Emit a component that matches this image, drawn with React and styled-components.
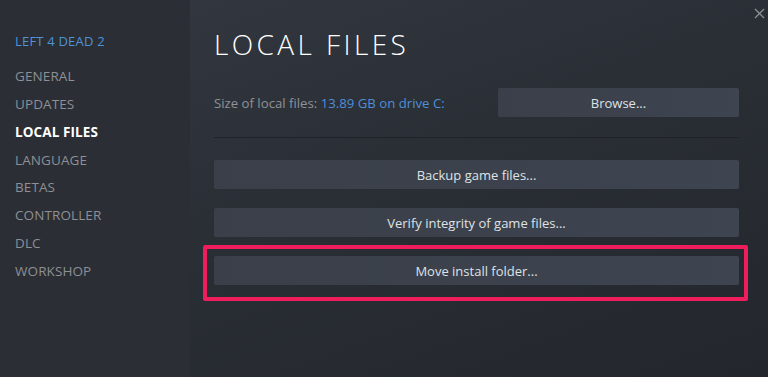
import React from "react";
import styled, { createGlobalStyle } from "styled-components";

const Global = createGlobalStyle`
  html, body { margin: 0; padding: 0; background: #2b2e34; }
  #root { width: 768px; height: 377px; overflow: hidden; }
  * { box-sizing: border-box; }
`;

const Window = styled.div`
  position: relative;
  display: flex;
  width: 768px;
  height: 377px;
  font-family: "Open Sans", "Noto Sans", sans-serif;
`;

const Sidebar = styled.nav`
  width: 190px;
  flex: none;
  background: #2b2e34;
  padding: 31px 0 0 15px;
  display: flex;
  flex-direction: column;
`;

const GameTitle = styled.div`
  color: #4d93d9;
  font-size: 13px;
  line-height: 20px;
  letter-spacing: 0.2px;
  margin-bottom: 15px;
`;

const NavItem = styled.div`
  color: ${(p) => (p.$active ? "#ffffff" : "#8d9095")};
  font-weight: ${(p) => (p.$active ? 700 : 400)};
  font-size: 13.5px;
  line-height: 20px;
  height: 27.85px;
  letter-spacing: 0.1px;
`;

const Main = styled.main`
  flex: 1;
  padding: 22px 29px 0 24px;
  background: linear-gradient(160deg, #32363e 0%, #2a2e35 40%, #23262d 100%);
  display: flex;
  flex-direction: column;
`;

const Title = styled.h1`
  margin: 0;
  color: #ffffff;
  font-weight: 300;
  font-size: 28px;
  line-height: 44px;
  letter-spacing: 3.4px;
`;

const InfoRow = styled.div`
  margin-top: 22px;
  display: flex;
  align-items: center;
  justify-content: space-between;
`;

const InfoText = styled.div`
  color: #8e9298;
  font-size: 13.2px;
`;

const Accent = styled.span`
  color: #4d8fd8;
`;

const Button = styled.div`
  position: relative;
  height: 29px;
  width: ${(p) => p.$width || "100%"};
  background: linear-gradient(90deg, #3a3f49 0%, #3e4450 100%);
  border-radius: 2px;
  color: #dfe2e6;
  font-size: 13px;
  display: flex;
  align-items: center;
  justify-content: center;

  ${(p) =>
    p.$highlight &&
    `
    &::after {
      content: "";
      position: absolute;
      left: -11px;
      right: -9px;
      top: -11px;
      bottom: -16px;
      border: 4px solid #f01d5c;
      border-radius: 2px;
      pointer-events: none;
    }
  `}
`;

const Divider = styled.div`
  margin-top: 20px;
  height: 1px;
  background: #1f2228;
`;

const Stack = styled.div`
  margin-top: 22px;
  display: flex;
  flex-direction: column;
  gap: 19px;
`;

const Close = styled.div`
  position: absolute;
  top: 2px;
  right: 3px;
  width: 11px;
  height: 11px;
`;

const nav = [
  "GENERAL",
  "UPDATES",
  "LOCAL FILES",
  "LANGUAGE",
  "BETAS",
  "CONTROLLER",
  "DLC",
  "WORKSHOP",
];

export default function App() {
  return (
    <>
      <Global />
      <Window>
        <Sidebar>
          <GameTitle>LEFT 4 DEAD 2</GameTitle>
          {nav.map((n) => (
            <NavItem key={n} $active={n === "LOCAL FILES"}>
              {n}
            </NavItem>
          ))}
        </Sidebar>
        <Main>
          <Title>LOCAL FILES</Title>
          <InfoRow>
            <InfoText>
              Size of local files: <Accent>13.89 GB on drive C:</Accent>
            </InfoText>
            <Button $width="241px">Browse...</Button>
          </InfoRow>
          <Divider />
          <Stack>
            <Button>Backup game files...</Button>
            <Button>Verify integrity of game files...</Button>
            <Button $highlight>Move install folder...</Button>
          </Stack>
        </Main>
        <Close>
          <svg width="11" height="11" viewBox="0 0 11 11">
            <path d="M1 1L10 10M10 1L1 10" stroke="#8b8f96" strokeWidth="1.3" />
          </svg>
        </Close>
      </Window>
    </>
  );
}
